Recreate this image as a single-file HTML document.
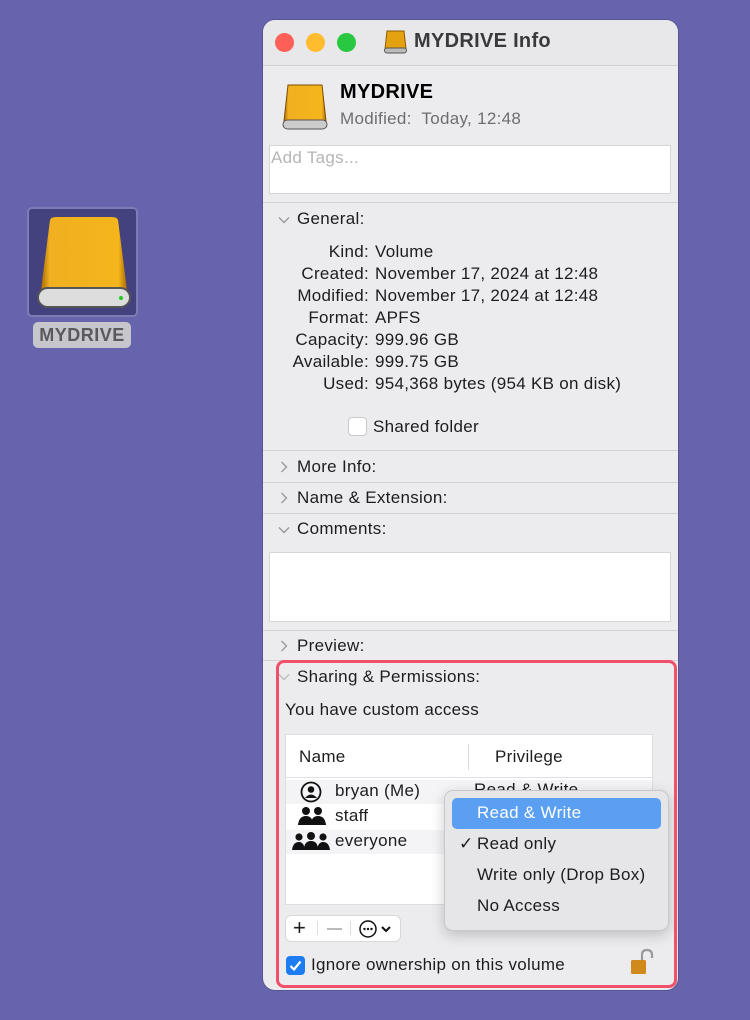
<!DOCTYPE html>
<html><head><meta charset="utf-8"><style>
*{margin:0;padding:0;box-sizing:border-box}
body{width:750px;height:1020px;background:#6664ad;position:relative;overflow:hidden;font-family:"Liberation Sans",sans-serif;color:#1d1d1f;font-size:17px;letter-spacing:0.3px}
.a{position:absolute;white-space:nowrap}
.win{position:absolute;left:263px;top:20px;width:415px;height:970px;background:#ececee;border-radius:12px;overflow:hidden;box-shadow:0 0 0 1px rgba(0,0,0,.15)}
.hr{position:absolute;left:0;width:415px;height:1px;background:#d2d2d4}
.chev{position:absolute;width:12px;height:12px}
</style></head><body>
<div class="a" style="left:27px;top:207px;width:111px;height:110px;background:#44417f;border:2px solid #7e7cb6;border-radius:5px"></div>
<svg class="a" style="left:36px;top:216px" width="96" height="94" viewBox="0 0 96 94">
<defs><linearGradient id="g" x1="0" x2="1"><stop offset="0" stop-color="#a86a00"/><stop offset=".1" stop-color="#f0b020"/><stop offset=".9" stop-color="#f5b51c"/><stop offset="1" stop-color="#a86a00"/></linearGradient></defs>
<path d="M14 4 Q15 1 20 1 H76 Q81 1 82 4 L91 74 H5 Z" fill="url(#g)"/>
<rect x="2" y="72" width="92" height="19" rx="9.5" fill="#ddd" stroke="#555" stroke-width="2"/>
<circle cx="85" cy="82" r="2" fill="#2c2"/></svg>
<div class="a" style="left:33px;top:322px;width:98px;height:26px;background:#c6c6cc;border-radius:5px;color:#5a5a5e;font-weight:bold;font-size:18px;text-align:center;line-height:26px;letter-spacing:0.5px">MYDRIVE</div>

<div class="win">
 <div class="a" style="left:0;top:0;width:415px;height:45px;background:#e8e8ea"></div>
 <div class="a" style="left:12px;top:13px;width:19px;height:19px;border-radius:50%;background:#fe5f57"></div>
 <div class="a" style="left:43px;top:13px;width:19px;height:19px;border-radius:50%;background:#febc2e"></div>
 <div class="a" style="left:74px;top:13px;width:19px;height:19px;border-radius:50%;background:#28c840"></div>
 <svg class="a" style="left:121px;top:9px" width="23" height="25" viewBox="0 0 23 25"><path d="M3 2 H20 L22 20 H1 Z" fill="#e5a210" stroke="#8a5a00"/><rect x="0.5" y="19" width="22" height="5" rx="2.5" fill="#bbb" stroke="#555"/></svg>
 <div class="a" style="left:151px;top:10px;font-size:20px;font-weight:bold;color:#3a3a3c">MYDRIVE Info</div>
 <div class="hr" style="top:45px"></div>
 <svg class="a" style="left:19px;top:63px" width="46" height="48" viewBox="0 0 46 48"><path d="M6 2 H40 L44 38 H2 Z" fill="url(#g)" stroke="#7a4d00"/><rect x="1" y="37" width="44" height="9" rx="4.5" fill="#ccc" stroke="#555"/></svg>
 <div class="a" style="left:77px;top:61px;font-size:20px;font-weight:bold;color:#000">MYDRIVE</div>
 <div class="a" style="left:77px;top:89px;color:#6e6e70">Modified:&nbsp; Today, 12:48</div>
 <div class="a" style="left:6px;top:125px;width:402px;height:49px;background:#fff;border:1px solid #d6d6d8"></div>
 <div class="a" style="left:8px;top:128px;color:#b5b5b7;font-size:17px">Add Tags...</div>
 <div class="hr" style="top:182px"></div>
 <svg class="chev" style="left:15px;top:194px" viewBox="0 0 12 12"><path d="M1 3.5 L6 8.5 L11 3.5" fill="none" stroke="#9a9a9c" stroke-width="1.4"/></svg>
 <div class="a" style="left:34px;top:189px">General:</div>
 <div class="a" style="left:0;top:221px;width:415px;line-height:22px">
  <div style="position:absolute;left:0;width:106px;text-align:right">Kind:<br>Created:<br>Modified:<br>Format:<br>Capacity:<br>Available:<br>Used:</div>
  <div style="position:absolute;left:112px">Volume<br>November 17, 2024 at 12:48<br>November 17, 2024 at 12:48<br>APFS<br>999.96 GB<br>999.75 GB<br>954,368 bytes (954 KB on disk)</div>
 </div>
 <div class="a" style="left:85px;top:397px;width:19px;height:19px;background:#fff;border:1px solid #c8c8ca;border-radius:4px"></div>
 <div class="a" style="left:110px;top:397px">Shared folder</div>
 <div class="hr" style="top:430px"></div>
 <svg class="chev" style="left:15px;top:441px" viewBox="0 0 12 12"><path d="M3.5 1 L8.5 6 L3.5 11" fill="none" stroke="#9a9a9c" stroke-width="1.4"/></svg>
 <div class="a" style="left:34px;top:437px">More Info:</div>
 <div class="hr" style="top:462px"></div>
 <svg class="chev" style="left:15px;top:472px" viewBox="0 0 12 12"><path d="M3.5 1 L8.5 6 L3.5 11" fill="none" stroke="#9a9a9c" stroke-width="1.4"/></svg>
 <div class="a" style="left:34px;top:468px">Name &amp; Extension:</div>
 <div class="hr" style="top:493px"></div>
 <svg class="chev" style="left:15px;top:504px" viewBox="0 0 12 12"><path d="M1 3.5 L6 8.5 L11 3.5" fill="none" stroke="#9a9a9c" stroke-width="1.4"/></svg>
 <div class="a" style="left:34px;top:499px">Comments:</div>
 <div class="a" style="left:6px;top:532px;width:402px;height:70px;background:#fff;border:1px solid #d6d6d8"></div>
 <div class="hr" style="top:610px"></div>
 <svg class="chev" style="left:15px;top:620px" viewBox="0 0 12 12"><path d="M3.5 1 L8.5 6 L3.5 11" fill="none" stroke="#9a9a9c" stroke-width="1.4"/></svg>
 <div class="a" style="left:34px;top:616px">Preview:</div>
 <div class="hr" style="top:640px"></div>
 <svg class="chev" style="left:15px;top:651px" viewBox="0 0 12 12"><path d="M1 3.5 L6 8.5 L11 3.5" fill="none" stroke="#bbb" stroke-width="1.4"/></svg>
 <div class="a" style="left:34px;top:647px">Sharing &amp; Permissions:</div>
 <div class="a" style="left:22px;top:680px">You have custom access</div>
 <div class="a" style="left:22px;top:714px;width:368px;height:171px;background:#fff;border:1px solid #dedee0"></div>
 <div class="a" style="left:23px;top:760px;width:366px;height:24px;background:#f4f4f6"></div>
 <div class="a" style="left:23px;top:810px;width:366px;height:24px;background:#f4f4f6"></div>
 <div class="a" style="left:23px;top:757px;width:366px;height:1px;background:#e0e0e2"></div>
 <div class="a" style="left:205px;top:724px;width:1px;height:26px;background:#dcdcde"></div>
 <div class="a" style="left:36px;top:727px">Name</div>
 <div class="a" style="left:232px;top:727px">Privilege</div>
 <svg class="a" style="left:37px;top:761px" width="22" height="22" viewBox="0 0 22 22"><circle cx="11" cy="11" r="9.5" fill="none" stroke="#111" stroke-width="1.8"/><circle cx="11" cy="8.5" r="3.3" fill="#111"/><path d="M5 17 Q11 10 17 17" fill="#111"/></svg>
 <div class="a" style="left:72px;top:761px;font-size:17px">bryan (Me)</div>
 <div class="a" style="left:211px;top:760px;height:10px;overflow:hidden;font-size:17px">Read &amp; Write</div>
 <svg class="a" style="left:34px;top:786px" width="30" height="20" viewBox="0 0 30 20"><circle cx="9" cy="5" r="4" fill="#111"/><circle cx="21" cy="5" r="4" fill="#111"/><path d="M1 19 Q2 10 9 10 Q16 10 16 19Z M14 19 Q14 10 21 10 Q28 10 29 19Z" fill="#111"/></svg>
 <div class="a" style="left:72px;top:786px;font-size:17px">staff</div>
 <svg class="a" style="left:29px;top:811px" width="38" height="20" viewBox="0 0 38 20"><circle cx="7" cy="6" r="3.6" fill="#111"/><circle cx="19" cy="5" r="4" fill="#111"/><circle cx="31" cy="6" r="3.6" fill="#111"/><path d="M0 19 Q1 11 7 11 Q12 11 13 19Z M12 19 Q12 10 19 10 Q26 10 26 19Z M25 19 Q26 11 31 11 Q37 11 38 19Z" fill="#111"/></svg>
 <div class="a" style="left:72px;top:811px;font-size:17px">everyone</div>
 <div class="a" style="left:23px;top:896px;width:114px;height:25px;background:#fff;border-radius:5px;box-shadow:0 0 0 1px #d8d8da"></div>
 <div class="a" style="left:30px;top:895px;font-size:22px">+</div>
 <div class="a" style="left:54px;top:901px;width:1px;height:14px;background:#ddd"></div>
 <div class="a" style="left:64px;top:908px;width:15px;height:1.5px;background:#bbb"></div>
 <div class="a" style="left:87px;top:901px;width:1px;height:14px;background:#ddd"></div>
 <svg class="a" style="left:95px;top:899px" width="40" height="20" viewBox="0 0 40 20"><circle cx="10" cy="10" r="8" fill="none" stroke="#111" stroke-width="1.5"/><circle cx="6.5" cy="10" r="1.2" fill="#111"/><circle cx="10" cy="10" r="1.2" fill="#111"/><circle cx="13.5" cy="10" r="1.2" fill="#111"/><path d="M24 8 L28 12 L32 8" fill="none" stroke="#111" stroke-width="2"/></svg>
 <div class="a" style="left:23px;top:936px;width:19px;height:19px;background:#1e7cf2;border-radius:4px"></div>
 <svg class="a" style="left:25px;top:938px" width="15" height="15" viewBox="0 0 15 15"><path d="M2.5 8 L6 11.5 L12.5 3.5" fill="none" stroke="#fff" stroke-width="2.2"/></svg>
 <div class="a" style="left:48px;top:935px;font-size:17px">Ignore ownership on this volume</div>
 <svg class="a" style="left:367px;top:928px" width="24" height="28" viewBox="0 0 24 28"><path d="M12 13 V7 Q12 2 17 2 Q22 2 22 7 V10" fill="none" stroke="#999" stroke-width="2.2"/><rect x="1" y="12" width="15" height="14" rx="1.5" fill="#d08a1c"/></svg>
 <div class="a" style="left:181px;top:770px;width:225px;height:141px;background:#e6e6e8;border:1px solid #c8c8ca;border-radius:9px;box-shadow:0 4px 14px rgba(0,0,0,.2)"></div>
 <div class="a" style="left:189px;top:778px;width:209px;height:31px;background:#5b9ff3;border-radius:5px"></div>
 <div class="a" style="left:214px;top:783px;color:#fff;font-size:17px">Read &amp; Write</div>
 <div class="a" style="left:196px;top:814px;font-size:17px">✓</div>
 <div class="a" style="left:214px;top:814px;font-size:17px">Read only</div>
 <div class="a" style="left:214px;top:845px;font-size:17px">Write only (Drop Box)</div>
 <div class="a" style="left:214px;top:876px;font-size:17px">No Access</div>
</div>
<div class="a" style="left:276px;top:660px;width:401px;height:328px;border:3px solid #f0506a;border-radius:8px"></div>
</body></html>
